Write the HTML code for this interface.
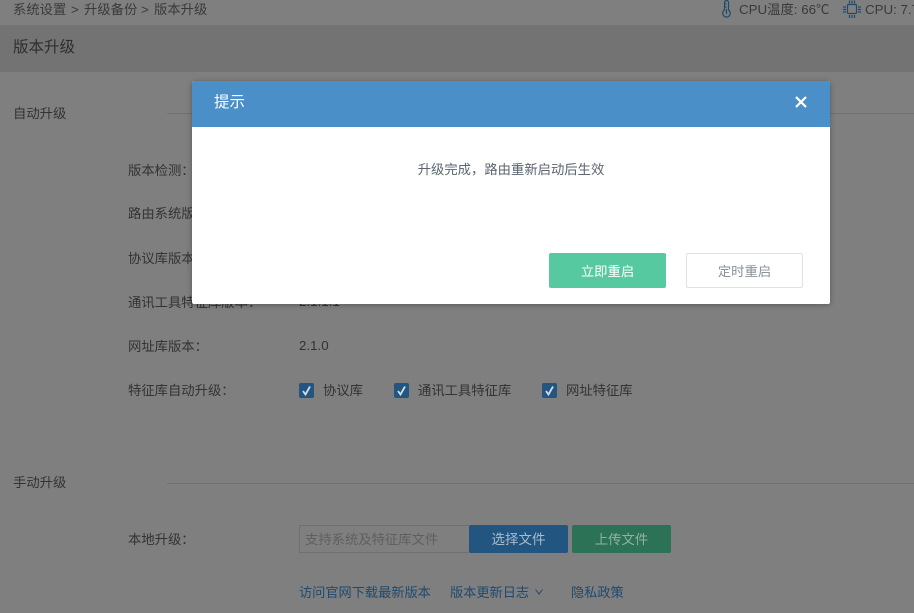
<!DOCTYPE html>
<html lang="zh">
<head>
<meta charset="utf-8">
<style>
html,body{margin:0;padding:0;width:914px;height:613px;overflow:hidden;background:#7f7f7f;font-family:"Liberation Sans","Noto Sans CJK SC",sans-serif;font-size:13.33px;color:#333}
.a{position:absolute;white-space:nowrap;line-height:18px}
.cb{position:absolute;width:15px;height:15px;background:#22557f;border-radius:2px}
.cb svg{display:block}
.line{position:absolute;height:1px;background:#707070}
.link{color:#1f4a6e;font-size:13.200px}
</style>
</head>
<body>
<div class="a" style="left:0;top:25px;width:914px;height:47px;background:#737373"></div>

<div class="a" style="left:13px;top:1px;color:#3a3a3a">系统设置</div>
<div class="a" style="left:71px;top:1px;color:#3a3a3a">&gt;</div>
<div class="a" style="left:84px;top:1px;color:#3a3a3a">升级备份</div>
<div class="a" style="left:141px;top:1px;color:#3a3a3a">&gt;</div>
<div class="a" style="left:154px;top:1px;color:#3a3a3a">版本升级</div>
<svg class="a" style="left:720px;top:0" width="13" height="18" viewBox="0 0 13 18" fill="none" stroke="#1f4a68" stroke-width="1.200"><path d="M4.500 10V2.500a2 2 0 0 1 4 0V10a3.800 3.800 0 1 1-4 0z"/><path d="M4.500 4h2M4.500 7h2M6.500 9v5"/></svg>
<div class="a" style="left:739px;top:1px;color:#3a3a3a">CPU温度: 66℃</div>
<svg class="a" style="left:842px;top:0" width="20" height="19" viewBox="0 0 20 19" fill="none" stroke="#1f4a68" stroke-width="1.200"><rect x="5.500" y="4.500" width="9" height="9" rx="1"/><path d="M1 7h3M1 9.500h3M1 12h3M16 7h3M16 9.500h3M16 12h3M7.500 0.500v3M10 0.500v3M12.500 0.500v3M7.500 15v3M10 15v3M12.500 15v3"/></svg>
<div class="a" style="left:865px;top:1px;color:#3a3a3a">CPU: 7.7%</div>

<div class="a" style="left:13px;top:39px;font-size:15.500px;color:#2e2e2e">版本升级</div>

<div class="a" style="left:13px;top:105px">自动升级</div>
<div class="line" style="left:167px;top:113px;width:747px"></div>

<div class="a" style="left:128px;top:162px">版本检测：</div>
<div class="a" style="left:128px;top:205px">路由系统版本：</div>
<div class="a" style="left:128px;top:250px">协议库版本：</div>
<div class="a" style="left:128px;top:294px">通讯工具特征库版本：</div>
<div class="a" style="left:299px;top:293px">2.1.1.1</div>
<div class="a" style="left:128px;top:338px">网址库版本：</div>
<div class="a" style="left:299px;top:337px">2.1.0</div>
<div class="a" style="left:128px;top:382px">特征库自动升级：</div>

<div class="cb" style="left:299px;top:383px"><svg width="15" height="15" viewBox="0 0 15 15" fill="none" stroke="#cfdde8" stroke-width="1.800"><path d="M4 8l2.500 3.500L11 3.500"/></svg></div>
<div class="a" style="left:323px;top:382px">协议库</div>
<div class="cb" style="left:394px;top:383px"><svg width="15" height="15" viewBox="0 0 15 15" fill="none" stroke="#cfdde8" stroke-width="1.800"><path d="M4 8l2.500 3.500L11 3.500"/></svg></div>
<div class="a" style="left:418px;top:382px">通讯工具特征库</div>
<div class="cb" style="left:542px;top:383px"><svg width="15" height="15" viewBox="0 0 15 15" fill="none" stroke="#cfdde8" stroke-width="1.800"><path d="M4 8l2.500 3.500L11 3.500"/></svg></div>
<div class="a" style="left:566px;top:382px">网址特征库</div>

<div class="a" style="left:13px;top:474px">手动升级</div>
<div class="line" style="left:167px;top:483px;width:747px"></div>

<div class="a" style="left:128px;top:531px">本地升级：</div>
<div class="a" style="left:299px;top:525px;width:169px;height:26px;border:1px solid #6f6f6f;border-right:0;line-height:27px;text-indent:5px;color:#5f5f5f">支持系统及特征库文件</div>
<div class="a" style="left:469px;top:525px;width:99px;height:28px;line-height:29px;background:#22557f;border-radius:2px;text-align:center;color:#a9bccd;font-size:13.500px">选择文件</div>
<div class="a" style="left:572px;top:525px;width:99px;height:28px;line-height:29px;background:#2c7257;border-radius:2px;text-align:center;color:#8fb3a3">上传文件</div>

<div class="a link" style="left:299px;top:584px">访问官网下载最新版本</div>
<div class="a link" style="left:450px;top:584px">版本更新日志</div>
<svg class="a" style="left:535px;top:589px" width="8" height="6" viewBox="0 0 8 6" fill="none" stroke="#1f4a6e" stroke-width="1"><path d="M0.500 0.500L4 5L7.500 0.500"/></svg>
<div class="a link" style="left:571px;top:584px">隐私政策</div>

<div class="a" style="left:192px;top:81px;width:638px;height:223px;background:#fff;border-radius:2px;box-shadow:0 1px 6px rgba(0,0,0,.3)"></div>
<div class="a" style="left:192px;top:81px;width:638px;height:46px;background:#4a8fc7;border-radius:2px 2px 0 0"></div>
<div class="a" style="left:214px;top:94px;font-size:15.500px;color:#fff">提示</div>
<svg class="a" style="left:794px;top:95px" width="14" height="14" viewBox="0 0 14 14" fill="none" stroke="#fff" stroke-width="2.200"><path d="M2 2l10 10M12 2L2 12"/></svg>
<div class="a" style="left:192px;top:161px;width:638px;text-align:center;color:#5a6570">升级完成，路由重新启动后生效</div>
<div class="a" style="left:549px;top:253px;width:117px;height:35px;line-height:37px;background:#57c9a0;border-radius:2px;text-align:center;color:#fff">立即重启</div>
<div class="a" style="left:686px;top:253px;width:115px;height:33px;line-height:35px;background:#fff;border:1px solid #dfe3e6;border-radius:2px;text-align:center;color:#8a9299">定时重启</div>
</body>
</html>
